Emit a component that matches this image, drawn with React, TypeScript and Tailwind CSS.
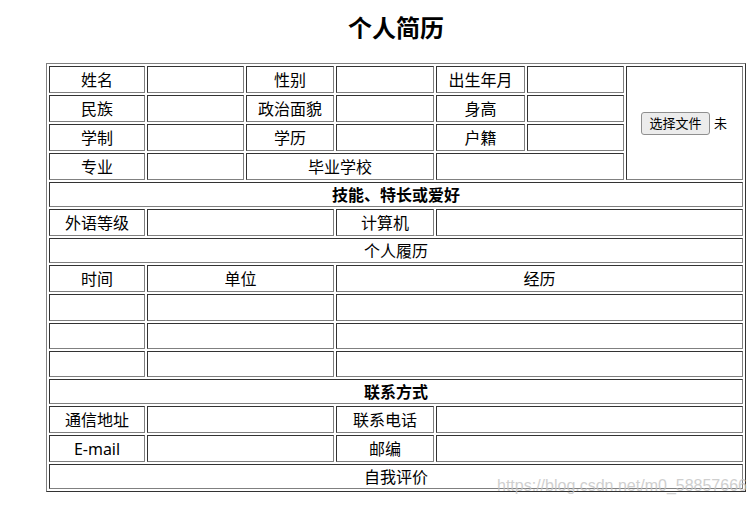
import React from "react";

// Inset cell border as a border="1" table draws it
const td =
  "border border-solid border-t-[#333333] border-l-[#333333] border-b-[#808080] border-r-[#808080] p-0 text-center align-middle";

const Cell = ({
  children,
  colSpan,
  rowSpan,
  className = "",
}: {
  children?: React.ReactNode;
  colSpan?: number;
  rowSpan?: number;
  className?: string;
}) => (
  <td colSpan={colSpan} rowSpan={rowSpan} className={`${td} ${className}`}>
    {children}
  </td>
);

function FileInput() {
  return (
    <div className="mx-auto flex w-[87px] items-center whitespace-nowrap text-[13px] leading-[16px]">
      <span className="flex h-[23px] w-[69px] shrink-0 items-center justify-center rounded-[3px] border border-[#8f8f8f] bg-[#ececec]">
        选择文件
      </span>
      <span className="ml-[4px] shrink-0">未</span>
    </div>
  );
}

export default function App() {
  return (
    <div className="relative h-[505px] w-[755px] overflow-hidden bg-white text-black font-['Noto_Sans','Noto_Sans_CJK_SC',sans-serif]">
      <div className="pl-[46px] pt-[11px]">
        <h2 className="w-[700px] text-center text-[24px] font-bold leading-[34px]">个人简历</h2>

        <table className="mt-[18px] w-[700px] table-fixed border-separate border-spacing-[2px] border border-solid border-t-[#808080] border-l-[#808080] border-b-[#333333] border-r-[#333333] text-[16px] leading-[20px]">
          <tbody>
            <tr className="h-[27px]">
              <Cell className="w-[96px]">姓名</Cell>
              <Cell className="w-[97px]" />
              <Cell className="w-[88px]">性别</Cell>
              <Cell className="w-[98px]" />
              <Cell className="w-[89px]">出生年月</Cell>
              <Cell className="w-[97px]" />
              <Cell className="w-[117px]" rowSpan={4}>
                <FileInput />
              </Cell>
            </tr>
            <tr className="h-[27px]">
              <Cell>民族</Cell>
              <Cell />
              <Cell>政治面貌</Cell>
              <Cell />
              <Cell>身高</Cell>
              <Cell />
            </tr>
            <tr className="h-[27px]">
              <Cell>学制</Cell>
              <Cell />
              <Cell>学历</Cell>
              <Cell />
              <Cell>户籍</Cell>
              <Cell />
            </tr>
            <tr className="h-[27px]">
              <Cell>专业</Cell>
              <Cell />
              <Cell colSpan={2}>毕业学校</Cell>
              <Cell colSpan={2} />
            </tr>

            <tr className="h-[25px]">
              <Cell colSpan={7} className="font-bold">
                技能、特长或爱好
              </Cell>
            </tr>
            <tr className="h-[27px]">
              <Cell>外语等级</Cell>
              <Cell colSpan={2} />
              <Cell>计算机</Cell>
              <Cell colSpan={3} />
            </tr>

            <tr className="h-[25px]">
              <Cell colSpan={7}>个人履历</Cell>
            </tr>
            <tr className="h-[27px]">
              <Cell>时间</Cell>
              <Cell colSpan={2}>单位</Cell>
              <Cell colSpan={4}>经历</Cell>
            </tr>
            {[27, 26, 26].map((h, i) => (
              <tr key={i} className={h === 27 ? "h-[27px]" : "h-[26px]"}>
                <Cell />
                <Cell colSpan={2} />
                <Cell colSpan={4} />
              </tr>
            ))}

            <tr className="h-[25px]">
              <Cell colSpan={7} className="font-bold">
                联系方式
              </Cell>
            </tr>
            <tr className="h-[27px]">
              <Cell>通信地址</Cell>
              <Cell colSpan={2} />
              <Cell>联系电话</Cell>
              <Cell colSpan={3} />
            </tr>
            <tr className="h-[27px]">
              <Cell>E-mail</Cell>
              <Cell colSpan={2} />
              <Cell>邮编</Cell>
              <Cell colSpan={3} />
            </tr>
            <tr className="h-[25px]">
              <Cell colSpan={7}>自我评价</Cell>
            </tr>
          </tbody>
        </table>
      </div>

      {/* blog watermark over the bottom-right corner */}
      <div className="pointer-events-none absolute left-[497px] top-[477px] whitespace-nowrap font-['Liberation_Sans',Arial,sans-serif] text-[16px] leading-[18px] text-[#c4c4c4] opacity-80">
        https://blog.csdn.net/m0_58857666
      </div>
    </div>
  );
}
